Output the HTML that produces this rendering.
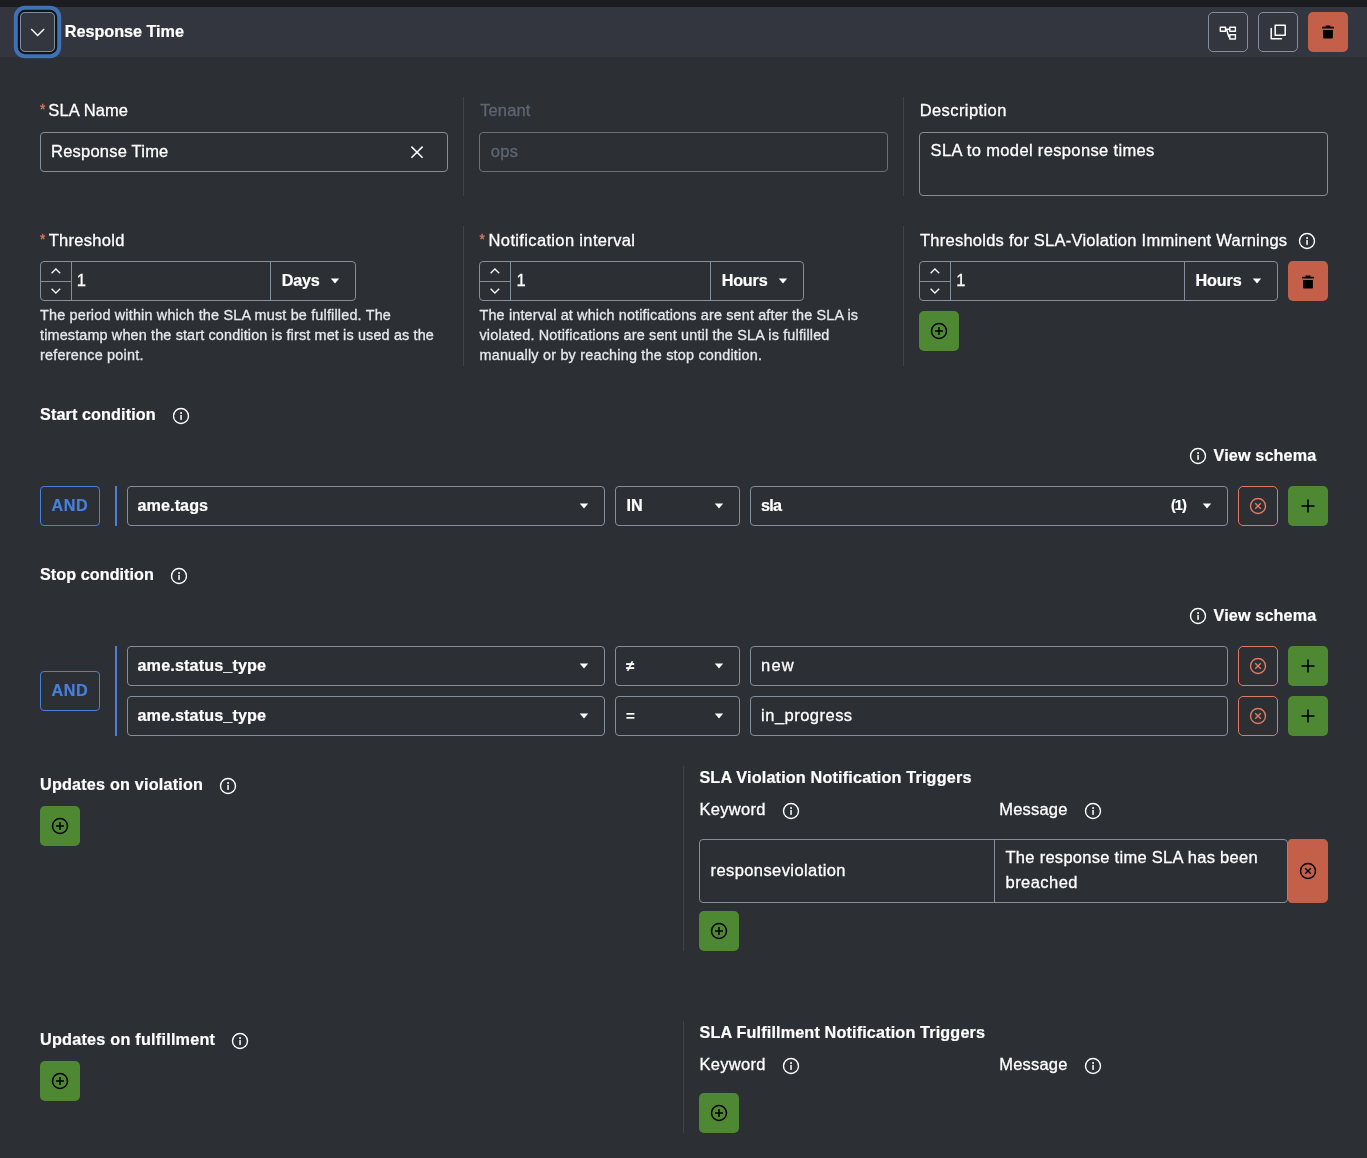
<!DOCTYPE html>
<html lang="en"><head><meta charset="utf-8"><title>Response Time</title>
<style>
html,body{margin:0;padding:0}
body{width:1367px;height:1158px;position:relative;overflow:hidden;background:#2c2f33;font-family:"Liberation Sans",sans-serif;color:#fff}
.t{position:absolute;white-space:pre;line-height:1;-webkit-text-stroke:0.3px}
#w{position:absolute;left:0;top:0;width:1367px;height:1158px;will-change:transform}
.bx{position:absolute;box-sizing:border-box;border:1px solid #858e9c;border-radius:4px}
.r{position:absolute}
.ic{position:absolute;display:block;overflow:visible}
</style></head>
<body>
<div class="r" style="left:0px;top:0px;width:1367px;height:7px;background:#1a1c20"></div>
<div class="r" style="left:0px;top:7px;width:1367px;height:50px;background:#33363e"></div>
<div class="bx" style="left:19.7px;top:12px;width:35.600px;height:40px;border-radius:5px;box-shadow:0 0 0 2.2px #111417,0 0 0 6.200px #3f72b4"></div>
<div class="bx" style="left:1208px;top:12px;width:40px;height:40px;border-radius:5px"></div>
<div class="bx" style="left:1258px;top:12px;width:40px;height:40px;border-radius:5px"></div>
<div class="r" style="left:1308px;top:12px;width:40px;height:40px;background:#c4604a;border-radius:5px"></div>
<div class="bx" style="left:40px;top:132px;width:408px;height:40px;"></div>
<div class="bx" style="left:479px;top:132px;width:409px;height:40px;border-color:#687180"></div>
<div class="bx" style="left:919px;top:132px;width:409px;height:64px;"></div>
<div class="r" style="left:463px;top:97px;width:1px;height:99px;background:#3c444d"></div>
<div class="r" style="left:903px;top:97px;width:1px;height:99px;background:#3c444d"></div>
<div class="bx" style="left:40px;top:261px;width:316px;height:40px;"></div>
<div class="r" style="left:71px;top:262px;width:1px;height:38px;background:#858e9c"></div>
<div class="r" style="left:41px;top:281px;width:30px;height:1px;background:#858e9c"></div>
<div class="r" style="left:270px;top:262px;width:1px;height:38px;background:#858e9c"></div>
<div class="bx" style="left:479px;top:261px;width:325px;height:40px;"></div>
<div class="r" style="left:510px;top:262px;width:1px;height:38px;background:#858e9c"></div>
<div class="r" style="left:480px;top:281px;width:30px;height:1px;background:#858e9c"></div>
<div class="r" style="left:710px;top:262px;width:1px;height:38px;background:#858e9c"></div>
<div class="bx" style="left:919px;top:261px;width:359px;height:40px;"></div>
<div class="r" style="left:950px;top:262px;width:1px;height:38px;background:#858e9c"></div>
<div class="r" style="left:920px;top:281px;width:30px;height:1px;background:#858e9c"></div>
<div class="r" style="left:1184px;top:262px;width:1px;height:38px;background:#858e9c"></div>
<div class="r" style="left:463px;top:226px;width:1px;height:140px;background:#3c444d"></div>
<div class="r" style="left:903px;top:226px;width:1px;height:140px;background:#3c444d"></div>
<div class="r" style="left:1288px;top:261px;width:40px;height:40px;background:#c4604a;border-radius:5px"></div>
<div class="r" style="left:919px;top:311px;width:40px;height:40px;background:#4f8833;border-radius:5px"></div>
<div class="bx" style="left:127px;top:486px;width:478px;height:40px;"></div>
<div class="bx" style="left:615px;top:486px;width:125px;height:40px;"></div>
<div class="bx" style="left:750px;top:486px;width:478px;height:40px;"></div>
<div class="bx" style="left:1238px;top:486px;width:40px;height:40px;border-color:#df7b62;border-radius:5px"></div>
<div class="r" style="left:1288px;top:486px;width:40px;height:40px;background:#4f8833;border-radius:5px"></div>
<div class="bx" style="left:127px;top:646px;width:478px;height:40px;"></div>
<div class="bx" style="left:615px;top:646px;width:125px;height:40px;"></div>
<div class="bx" style="left:750px;top:646px;width:478px;height:40px;"></div>
<div class="bx" style="left:1238px;top:646px;width:40px;height:40px;border-color:#df7b62;border-radius:5px"></div>
<div class="r" style="left:1288px;top:646px;width:40px;height:40px;background:#4f8833;border-radius:5px"></div>
<div class="bx" style="left:127px;top:696px;width:478px;height:40px;"></div>
<div class="bx" style="left:615px;top:696px;width:125px;height:40px;"></div>
<div class="bx" style="left:750px;top:696px;width:478px;height:40px;"></div>
<div class="bx" style="left:1238px;top:696px;width:40px;height:40px;border-color:#df7b62;border-radius:5px"></div>
<div class="r" style="left:1288px;top:696px;width:40px;height:40px;background:#4f8833;border-radius:5px"></div>
<div class="bx" style="left:40px;top:486px;width:60px;height:40px;border-color:#4880dc"></div>
<div class="bx" style="left:40px;top:671px;width:60px;height:40px;border-color:#4880dc"></div>
<div class="r" style="left:115px;top:486px;width:2px;height:40px;background:#4880dc"></div>
<div class="r" style="left:115px;top:646px;width:2px;height:90px;background:#4880dc"></div>
<div class="r" style="left:683px;top:766px;width:1px;height:185px;background:#3c444d"></div>
<div class="r" style="left:40px;top:806px;width:40px;height:40px;background:#4f8833;border-radius:5px"></div>
<div class="r" style="left:683px;top:1021px;width:1px;height:112px;background:#3c444d"></div>
<div class="r" style="left:40px;top:1061px;width:40px;height:40px;background:#4f8833;border-radius:5px"></div>
<div class="bx" style="left:699px;top:839px;width:589px;height:64px;"></div>
<div class="r" style="left:994px;top:840px;width:1px;height:62px;background:#858e9c"></div>
<div class="r" style="left:1288px;top:839px;width:40px;height:64px;background:#c4604a;border-radius:4px 5px 5px 4px"></div>
<div class="r" style="left:699px;top:911px;width:40px;height:40px;background:#4f8833;border-radius:5px"></div>
<div class="r" style="left:699px;top:1093px;width:40px;height:40px;background:#4f8833;border-radius:5px"></div>
<svg class="ic" style="left:28px;top:24px" width="20" height="16" viewBox="0 0 20 16"><path d="M3.2 5l6.450 6.450L16.100 5" stroke="#fff" stroke-width="1.5" fill="none"/></svg>
<svg class="ic" style="left:1216px;top:22px" width="24" height="20" viewBox="0 0 24 20"><g fill="none" stroke="#fff" stroke-width="1.4" stroke-linejoin="round"><rect x="4.300" y="5.200" width="5.200" height="4"/><rect x="13.800" y="5.200" width="5.600" height="4"/><rect x="13.800" y="12.700" width="5.600" height="4.300"/><path d="M9.500 7.200h4.300M10.500 7.200l2.300 7.600h1"/></g></svg>
<svg class="ic" style="left:1266px;top:20px" width="24" height="24" viewBox="0 0 24 24"><g fill="none" stroke="#fff" stroke-width="1.5" stroke-linejoin="round" stroke-linecap="round"><rect x="9.200" y="5.300" width="10" height="10"/><path d="M5.200 8.500v10.200h10.200"/></g></svg>
<svg class="ic" style="left:1321px;top:23.6px" width="14" height="16" viewBox="0 0 14 16"><path d="M4.6 1.4h4.8v1.3h3.500v1.900H1.100V2.700h3.500z M2.100 6.100h9.800v7.400a1 1 0 0 1-1 1H3.100a1 1 0 0 1-1-1z" fill="#000"/></svg>
<svg class="ic" style="left:409px;top:144px" width="16" height="16" viewBox="0 0 16 16"><path d="M2.400 2.600l11.200 11.200M13.600 2.600L2.400 13.800" stroke="#fff" stroke-width="1.5" fill="none"/></svg>
<svg class="ic" style="left:40px;top:261px" width="32" height="40" viewBox="0 0 32 40"><path d="M11.6 12.300l4.300-4.300 4.300 4.300M11.6 27.700l4.300 4.300 4.300-4.300" stroke="#fff" stroke-width="1.3" fill="none"/></svg>
<svg class="ic" style="left:330.2px;top:277.6px" width="10" height="6" viewBox="0 0 10 6"><path d="M0.8 0.4h8.4L5 5.6z" fill="#fff"/></svg>
<svg class="ic" style="left:479px;top:261px" width="32" height="40" viewBox="0 0 32 40"><path d="M11.6 12.300l4.300-4.300 4.300 4.300M11.6 27.700l4.300 4.300 4.300-4.300" stroke="#fff" stroke-width="1.3" fill="none"/></svg>
<svg class="ic" style="left:778px;top:277.6px" width="10" height="6" viewBox="0 0 10 6"><path d="M0.8 0.4h8.4L5 5.6z" fill="#fff"/></svg>
<svg class="ic" style="left:919px;top:261px" width="32" height="40" viewBox="0 0 32 40"><path d="M11.6 12.300l4.300-4.300 4.300 4.300M11.6 27.700l4.300 4.300 4.300-4.300" stroke="#fff" stroke-width="1.3" fill="none"/></svg>
<svg class="ic" style="left:1252px;top:277.6px" width="10" height="6" viewBox="0 0 10 6"><path d="M0.8 0.4h8.4L5 5.6z" fill="#fff"/></svg>
<svg class="ic" style="left:1301px;top:273.5px" width="14" height="16" viewBox="0 0 14 16"><path d="M4.6 1.4h4.8v1.3h3.500v1.900H1.100V2.700h3.500z M2.100 6.100h9.800v7.400a1 1 0 0 1-1 1H3.100a1 1 0 0 1-1-1z" fill="#000"/></svg>
<svg class="ic" style="left:930px;top:322px" width="18" height="18" viewBox="0 0 18 18"><circle cx="9" cy="9" r="7.5" fill="none" stroke="#000" stroke-width="1.5"/><path d="M9 5v8M5 9h8" stroke="#000" stroke-width="1.5" fill="none"/></svg>
<svg class="ic" style="left:1298px;top:232px" width="18" height="18" viewBox="0 0 18 18"><circle cx="9" cy="9" r="7.5" fill="none" stroke="#fff" stroke-width="1.4"/><rect x="8.3" y="7.9" width="1.5" height="5" fill="#fff"/><circle cx="9.05" cy="5.900" r="1" fill="#fff"/></svg>
<svg class="ic" style="left:172px;top:407px" width="18" height="18" viewBox="0 0 18 18"><circle cx="9" cy="9" r="7.5" fill="none" stroke="#fff" stroke-width="1.4"/><rect x="8.3" y="7.9" width="1.5" height="5" fill="#fff"/><circle cx="9.05" cy="5.900" r="1" fill="#fff"/></svg>
<svg class="ic" style="left:170px;top:566.5px" width="18" height="18" viewBox="0 0 18 18"><circle cx="9" cy="9" r="7.5" fill="none" stroke="#fff" stroke-width="1.4"/><rect x="8.3" y="7.9" width="1.5" height="5" fill="#fff"/><circle cx="9.05" cy="5.900" r="1" fill="#fff"/></svg>
<svg class="ic" style="left:1189px;top:447px" width="18" height="18" viewBox="0 0 18 18"><circle cx="9" cy="9" r="7.5" fill="none" stroke="#fff" stroke-width="1.4"/><rect x="8.3" y="7.9" width="1.5" height="5" fill="#fff"/><circle cx="9.05" cy="5.900" r="1" fill="#fff"/></svg>
<svg class="ic" style="left:1189px;top:607px" width="18" height="18" viewBox="0 0 18 18"><circle cx="9" cy="9" r="7.5" fill="none" stroke="#fff" stroke-width="1.4"/><rect x="8.3" y="7.9" width="1.5" height="5" fill="#fff"/><circle cx="9.05" cy="5.900" r="1" fill="#fff"/></svg>
<svg class="ic" style="left:579px;top:502.8px" width="10" height="6" viewBox="0 0 10 6"><path d="M0.8 0.4h8.4L5 5.6z" fill="#fff"/></svg>
<svg class="ic" style="left:713.8px;top:502.8px" width="10" height="6" viewBox="0 0 10 6"><path d="M0.8 0.4h8.4L5 5.6z" fill="#fff"/></svg>
<svg class="ic" style="left:1249px;top:497px" width="18" height="18" viewBox="0 0 18 18"><circle cx="9" cy="9" r="7.5" fill="none" stroke="#df7b62" stroke-width="1.4"/><path d="M6.2 6.2l5.6 5.6M11.8 6.2l-5.6 5.6" stroke="#df7b62" stroke-width="1.4" fill="none"/></svg>
<svg class="ic" style="left:1299px;top:497px" width="18" height="18" viewBox="0 0 18 18"><path d="M9 2.5v13M2.5 9h13" stroke="#000" stroke-width="1.6" fill="none"/></svg>
<svg class="ic" style="left:1202px;top:502.8px" width="10" height="6" viewBox="0 0 10 6"><path d="M0.8 0.4h8.4L5 5.6z" fill="#fff"/></svg>
<svg class="ic" style="left:579px;top:662.8px" width="10" height="6" viewBox="0 0 10 6"><path d="M0.8 0.4h8.4L5 5.6z" fill="#fff"/></svg>
<svg class="ic" style="left:713.8px;top:662.8px" width="10" height="6" viewBox="0 0 10 6"><path d="M0.8 0.4h8.4L5 5.6z" fill="#fff"/></svg>
<svg class="ic" style="left:1249px;top:657px" width="18" height="18" viewBox="0 0 18 18"><circle cx="9" cy="9" r="7.5" fill="none" stroke="#df7b62" stroke-width="1.4"/><path d="M6.2 6.2l5.6 5.6M11.8 6.2l-5.6 5.6" stroke="#df7b62" stroke-width="1.4" fill="none"/></svg>
<svg class="ic" style="left:1299px;top:657px" width="18" height="18" viewBox="0 0 18 18"><path d="M9 2.5v13M2.5 9h13" stroke="#000" stroke-width="1.6" fill="none"/></svg>
<svg class="ic" style="left:579px;top:712.8px" width="10" height="6" viewBox="0 0 10 6"><path d="M0.8 0.4h8.4L5 5.6z" fill="#fff"/></svg>
<svg class="ic" style="left:713.8px;top:712.8px" width="10" height="6" viewBox="0 0 10 6"><path d="M0.8 0.4h8.4L5 5.6z" fill="#fff"/></svg>
<svg class="ic" style="left:1249px;top:707px" width="18" height="18" viewBox="0 0 18 18"><circle cx="9" cy="9" r="7.5" fill="none" stroke="#df7b62" stroke-width="1.4"/><path d="M6.2 6.2l5.6 5.6M11.8 6.2l-5.6 5.6" stroke="#df7b62" stroke-width="1.4" fill="none"/></svg>
<svg class="ic" style="left:1299px;top:707px" width="18" height="18" viewBox="0 0 18 18"><path d="M9 2.5v13M2.5 9h13" stroke="#000" stroke-width="1.6" fill="none"/></svg>
<svg class="ic" style="left:51px;top:817px" width="18" height="18" viewBox="0 0 18 18"><circle cx="9" cy="9" r="7.5" fill="none" stroke="#000" stroke-width="1.5"/><path d="M9 5v8M5 9h8" stroke="#000" stroke-width="1.5" fill="none"/></svg>
<svg class="ic" style="left:782px;top:802px" width="18" height="18" viewBox="0 0 18 18"><circle cx="9" cy="9" r="7.5" fill="none" stroke="#fff" stroke-width="1.4"/><rect x="8.3" y="7.9" width="1.5" height="5" fill="#fff"/><circle cx="9.05" cy="5.900" r="1" fill="#fff"/></svg>
<svg class="ic" style="left:1084px;top:802px" width="18" height="18" viewBox="0 0 18 18"><circle cx="9" cy="9" r="7.5" fill="none" stroke="#fff" stroke-width="1.4"/><rect x="8.3" y="7.9" width="1.5" height="5" fill="#fff"/><circle cx="9.05" cy="5.900" r="1" fill="#fff"/></svg>
<svg class="ic" style="left:51px;top:1072px" width="18" height="18" viewBox="0 0 18 18"><circle cx="9" cy="9" r="7.5" fill="none" stroke="#000" stroke-width="1.5"/><path d="M9 5v8M5 9h8" stroke="#000" stroke-width="1.5" fill="none"/></svg>
<svg class="ic" style="left:782px;top:1057px" width="18" height="18" viewBox="0 0 18 18"><circle cx="9" cy="9" r="7.5" fill="none" stroke="#fff" stroke-width="1.4"/><rect x="8.3" y="7.9" width="1.5" height="5" fill="#fff"/><circle cx="9.05" cy="5.900" r="1" fill="#fff"/></svg>
<svg class="ic" style="left:1084px;top:1057px" width="18" height="18" viewBox="0 0 18 18"><circle cx="9" cy="9" r="7.5" fill="none" stroke="#fff" stroke-width="1.4"/><rect x="8.3" y="7.9" width="1.5" height="5" fill="#fff"/><circle cx="9.05" cy="5.900" r="1" fill="#fff"/></svg>
<svg class="ic" style="left:219px;top:776.6px" width="18" height="18" viewBox="0 0 18 18"><circle cx="9" cy="9" r="7.5" fill="none" stroke="#fff" stroke-width="1.4"/><rect x="8.3" y="7.9" width="1.5" height="5" fill="#fff"/><circle cx="9.05" cy="5.900" r="1" fill="#fff"/></svg>
<svg class="ic" style="left:231px;top:1031.6px" width="18" height="18" viewBox="0 0 18 18"><circle cx="9" cy="9" r="7.5" fill="none" stroke="#fff" stroke-width="1.4"/><rect x="8.3" y="7.9" width="1.5" height="5" fill="#fff"/><circle cx="9.05" cy="5.900" r="1" fill="#fff"/></svg>
<svg class="ic" style="left:1299px;top:862px" width="18" height="18" viewBox="0 0 18 18"><circle cx="9" cy="9" r="7.5" fill="none" stroke="#000" stroke-width="1.4"/><path d="M6.2 6.2l5.6 5.6M11.8 6.2l-5.6 5.6" stroke="#000" stroke-width="1.4" fill="none"/></svg>
<svg class="ic" style="left:710px;top:922px" width="18" height="18" viewBox="0 0 18 18"><circle cx="9" cy="9" r="7.5" fill="none" stroke="#000" stroke-width="1.5"/><path d="M9 5v8M5 9h8" stroke="#000" stroke-width="1.5" fill="none"/></svg>
<svg class="ic" style="left:710px;top:1104px" width="18" height="18" viewBox="0 0 18 18"><circle cx="9" cy="9" r="7.5" fill="none" stroke="#000" stroke-width="1.5"/><path d="M9 5v8M5 9h8" stroke="#000" stroke-width="1.5" fill="none"/></svg>
<div id="w">
<div class="t" style="left:64.8px;top:22.9px;font-size:16.2px;font-weight:700;-webkit-text-stroke:0.2px;letter-spacing:-0.02px;">Response Time</div>
<div class="t" style="left:39.9px;top:102.9px;font-size:13.8px;color:#df7b62;">*</div>
<div class="t" style="left:48.3px;top:102.2px;font-size:16.5px;letter-spacing:0.12px;">SLA Name</div>
<div class="t" style="left:480.2px;top:102.2px;font-size:16.5px;color:#5c6773;letter-spacing:0.13px;">Tenant</div>
<div class="t" style="left:919.7px;top:102.2px;font-size:16.5px;letter-spacing:0.41px;">Description</div>
<div class="t" style="left:51.0px;top:142.7px;font-size:16.5px;letter-spacing:0.22px;">Response Time</div>
<div class="t" style="left:490.7px;top:142.7px;font-size:16.5px;color:#5c6773;letter-spacing:0.40px;">ops</div>
<div class="t" style="left:930.6px;top:142.2px;font-size:16.5px;letter-spacing:0.35px;">SLA to model response times</div>
<div class="t" style="left:39.9px;top:232.8px;font-size:13.8px;color:#df7b62;">*</div>
<div class="t" style="left:48.7px;top:232.1px;font-size:16.5px;letter-spacing:0.30px;">Threshold</div>
<div class="t" style="left:479.4px;top:232.8px;font-size:13.8px;color:#df7b62;">*</div>
<div class="t" style="left:488.6px;top:232.1px;font-size:16.5px;letter-spacing:0.35px;">Notification interval</div>
<div class="t" style="left:920.0px;top:232.1px;font-size:16.5px;letter-spacing:0.25px;">Thresholds for SLA-Violation Imminent Warnings</div>
<div class="t" style="left:76.8px;top:272.0px;font-size:16.5px;">1</div>
<div class="t" style="left:281.7px;top:272.3px;font-size:16.2px;font-weight:700;-webkit-text-stroke:0.2px;letter-spacing:-0.23px;">Days</div>
<div class="t" style="left:516.6px;top:272.0px;font-size:16.5px;">1</div>
<div class="t" style="left:721.7px;top:272.3px;font-size:16.2px;font-weight:700;-webkit-text-stroke:0.2px;letter-spacing:-0.20px;">Hours</div>
<div class="t" style="left:956.3px;top:272.0px;font-size:16.5px;">1</div>
<div class="t" style="left:1195.5px;top:272.3px;font-size:16.2px;font-weight:700;-webkit-text-stroke:0.2px;letter-spacing:-0.12px;">Hours</div>
<div class="t" style="left:40.0px;top:308.1px;font-size:14.4px;color:#e6e9ed;letter-spacing:0.18px;">The period within which the SLA must be fulfilled. The</div>
<div class="t" style="left:40.0px;top:328.0px;font-size:14.4px;color:#e6e9ed;letter-spacing:0.15px;">timestamp when the start condition is first met is used as the</div>
<div class="t" style="left:40.0px;top:347.9px;font-size:14.4px;color:#e6e9ed;letter-spacing:0.23px;">reference point.</div>
<div class="t" style="left:479.5px;top:308.1px;font-size:14.4px;color:#e6e9ed;letter-spacing:0.15px;">The interval at which notifications are sent after the SLA is</div>
<div class="t" style="left:479.5px;top:328.0px;font-size:14.4px;color:#e6e9ed;letter-spacing:0.17px;">violated. Notifications are sent until the SLA is fulfilled</div>
<div class="t" style="left:479.5px;top:347.9px;font-size:14.4px;color:#e6e9ed;letter-spacing:0.21px;">manually or by reaching the stop condition.</div>
<div class="t" style="left:40.0px;top:406.2px;font-size:16.2px;font-weight:700;-webkit-text-stroke:0.2px;letter-spacing:0.10px;">Start condition</div>
<div class="t" style="left:40.0px;top:566.2px;font-size:16.2px;font-weight:700;-webkit-text-stroke:0.2px;letter-spacing:0.05px;">Stop condition</div>
<div class="t" style="left:1213.6px;top:447.0px;font-size:16.2px;font-weight:700;-webkit-text-stroke:0.2px;letter-spacing:0.13px;">View schema</div>
<div class="t" style="left:1213.6px;top:607.0px;font-size:16.2px;font-weight:700;-webkit-text-stroke:0.2px;letter-spacing:0.13px;">View schema</div>
<div class="t" style="left:51.6px;top:497.3px;font-size:16.2px;font-weight:700;-webkit-text-stroke:0.2px;color:#4880dc;letter-spacing:0.46px;">AND</div>
<div class="t" style="left:51.6px;top:682.3px;font-size:16.2px;font-weight:700;-webkit-text-stroke:0.2px;color:#4880dc;letter-spacing:0.46px;">AND</div>
<div class="t" style="left:137.5px;top:496.8px;font-size:16.2px;font-weight:700;-webkit-text-stroke:0.2px;letter-spacing:0.06px;">ame.tags</div>
<div class="t" style="left:626.4px;top:497.3px;font-size:16.2px;font-weight:700;-webkit-text-stroke:0.2px;letter-spacing:0.01px;">IN</div>
<div class="t" style="left:761.0px;top:497.3px;font-size:16.2px;font-weight:700;-webkit-text-stroke:0.2px;letter-spacing:-0.76px;">sla</div>
<div class="t" style="left:1171.0px;top:498.2px;font-size:14.6px;font-weight:700;-webkit-text-stroke:0.2px;letter-spacing:-1.02px;">(1)</div>
<div class="t" style="left:137.5px;top:656.9px;font-size:16.2px;font-weight:700;-webkit-text-stroke:0.2px;letter-spacing:0.12px;">ame.status_type</div>
<div class="t" style="left:137.5px;top:706.9px;font-size:16.2px;font-weight:700;-webkit-text-stroke:0.2px;letter-spacing:0.12px;">ame.status_type</div>
<div class="t" style="left:625.9px;top:657.7px;font-size:15px;font-weight:700;-webkit-text-stroke:0.2px;">≠</div>
<div class="t" style="left:625.9px;top:707.7px;font-size:15px;font-weight:700;-webkit-text-stroke:0.2px;">=</div>
<div class="t" style="left:761.1px;top:657.3px;font-size:16.5px;letter-spacing:1.11px;">new</div>
<div class="t" style="left:761.1px;top:707.3px;font-size:16.5px;letter-spacing:0.48px;">in_progress</div>
<div class="t" style="left:40.0px;top:775.8px;font-size:16.2px;font-weight:700;-webkit-text-stroke:0.2px;letter-spacing:0.20px;">Updates on violation</div>
<div class="t" style="left:40.0px;top:1030.8px;font-size:16.2px;font-weight:700;-webkit-text-stroke:0.2px;letter-spacing:0.24px;">Updates on fulfillment</div>
<div class="t" style="left:699.4px;top:769.4px;font-size:16.2px;font-weight:700;-webkit-text-stroke:0.2px;letter-spacing:0.17px;">SLA Violation Notification Triggers</div>
<div class="t" style="left:699.6px;top:1024.4px;font-size:16.2px;font-weight:700;-webkit-text-stroke:0.2px;letter-spacing:0.15px;">SLA Fulfillment Notification Triggers</div>
<div class="t" style="left:699.4px;top:801.2px;font-size:16.5px;letter-spacing:0.30px;">Keyword</div>
<div class="t" style="left:999.2px;top:801.2px;font-size:16.5px;letter-spacing:0.21px;">Message</div>
<div class="t" style="left:699.4px;top:1056.2px;font-size:16.5px;letter-spacing:0.30px;">Keyword</div>
<div class="t" style="left:999.2px;top:1056.2px;font-size:16.5px;letter-spacing:0.21px;">Message</div>
<div class="t" style="left:710.5px;top:861.7px;font-size:16.5px;letter-spacing:0.41px;">responseviolation</div>
<div class="t" style="left:1005.5px;top:849.2px;font-size:16.5px;letter-spacing:0.28px;">The response time SLA has been</div>
<div class="t" style="left:1005.5px;top:874.3px;font-size:16.5px;letter-spacing:0.46px;">breached</div>
</div>
</body></html>
